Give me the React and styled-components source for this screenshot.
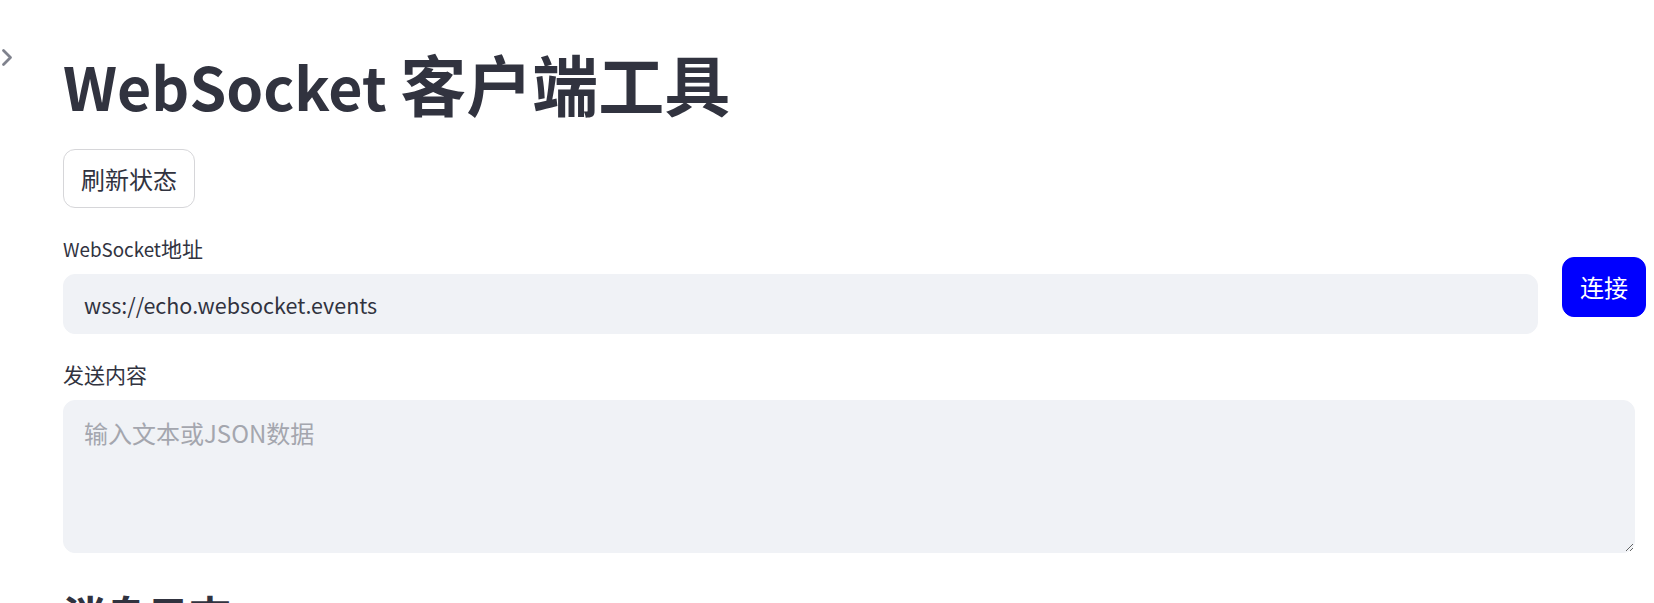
import React, { useState } from "react";
import styled, { createGlobalStyle } from "styled-components";

const GlobalStyle = createGlobalStyle`
  html, body {
    margin: 0;
    padding: 0;
    background: #ffffff;
  }
  body {
    font-family: "Noto Sans CJK SC", "Noto Sans", sans-serif;
    color: #31333f;
    overflow: hidden;
  }
  * {
    box-sizing: border-box;
  }
`;

const Page = styled.div`
  position: relative;
  min-height: 603px;
`;

const SidebarToggle = styled.button`
  position: absolute;
  left: 0;
  top: 47px;
  width: 16px;
  height: 21px;
  padding: 0;
  border: none;
  background: transparent;
  color: #7f828d;
  cursor: pointer;
  svg {
    display: block;
  }
`;

const Main = styled.main`
  display: flex;
  flex-direction: column;
  gap: 24px;
  padding: 43px 19px 0 63px;
`;

// latin runs in the CJK font come out too wide, so they get a smaller size
const Latin = styled.span`
  font-size: 0.895em;
  line-height: 1;
`;

const Title = styled.h1`
  margin: 0;
  padding-bottom: 4px;
  font-size: 66px;
  font-weight: 700;
  line-height: 78px;
  color: #31333f;
`;

const Subheader = styled.h3`
  margin: 0;
  padding-top: 12px;
  font-size: 42px;
  font-weight: 700;
  line-height: 1.2;
  color: #31333f;
`;

const Button = styled.button`
  display: inline-flex;
  align-items: center;
  justify-content: center;
  height: ${(p) => (p.$primary ? "60px" : "59px")};
  padding: 0 17px;
  border-radius: 12px;
  font-family: inherit;
  font-size: 24px;
  line-height: 1;
  cursor: pointer;
  border: 1px solid ${(p) => (p.$primary ? "#0000ff" : "#d6d6d9")};
  background: ${(p) => (p.$primary ? "#0000ff" : "#ffffff")};
  color: ${(p) => (p.$primary ? "#ffffff" : "#31333f")};
  margin-top: ${(p) => p.$offset || 0}px;
  flex-shrink: 0;
  align-self: flex-start;
`;

const Field = styled.div`
  display: flex;
  flex-direction: column;
  flex: 1;
  min-width: 0;
`;

const Label = styled.label`
  display: block;
  height: 33px;
  margin-bottom: 9px;
  font-size: 21px;
  line-height: 33px;
  color: #31333f;
`;

const Row = styled.div`
  display: flex;
  align-items: flex-start;
  gap: 24px;
  margin-right: -11px;
`;

const TextInput = styled.input`
  width: 100%;
  height: 60px;
  padding: 0 20px;
  border: 1px solid #f0f2f6;
  border-radius: 12px;
  background: #f0f2f6;
  font-family: inherit;
  font-size: 21.5px;
  color: #31333f;
  outline: none;
`;

const TextArea = styled.textarea`
  width: 100%;
  height: 153px;
  padding: 14px 20px;
  border: 1px solid #f0f2f6;
  border-radius: 12px;
  background: #f0f2f6;
  font-family: inherit;
  font-size: 24px;
  line-height: 1.5;
  color: #31333f;
  outline: none;
  resize: vertical;
  &::placeholder {
    color: #a4a6ae;
  }
`;

function Mixed({ text }) {
  const parts = text.split(/([A-Za-z0-9 :/.]+)/).filter(Boolean);
  return parts.map((part, i) =>
    /[A-Za-z0-9]/.test(part) ? <Latin key={i}>{part}</Latin> : <React.Fragment key={i}>{part}</React.Fragment>
  );
}

function ChevronRight() {
  return (
    <svg width="16" height="21" viewBox="0 0 16 21" fill="none">
      <polyline
        points="3.5,3.5 10.5,10.5 3.5,17.5"
        stroke="currentColor"
        strokeWidth="2.8"
        strokeLinecap="round"
        strokeLinejoin="round"
      />
    </svg>
  );
}

export default function App() {
  const [url, setUrl] = useState("wss://echo.websocket.events");
  const [message, setMessage] = useState("");

  return (
    <Page>
      <GlobalStyle />
      <SidebarToggle aria-label="open sidebar">
        <ChevronRight />
      </SidebarToggle>
      <Main>
        <Title>
          <Mixed text="WebSocket 客户端工具" />
        </Title>
        <div>
          <Button>刷新状态</Button>
        </div>
        <Row>
          <Field>
            <Label>
              <Mixed text="WebSocket地址" />
            </Label>
            <TextInput value={url} onChange={(e) => setUrl(e.target.value)} />
          </Field>
          <Button $primary $offset={25}>
            连接
          </Button>
        </Row>
        <Field>
          <Label>发送内容</Label>
          <TextArea
            placeholder="输入文本或JSON数据"
            value={message}
            onChange={(e) => setMessage(e.target.value)}
          />
        </Field>
        <Subheader>消息日志</Subheader>
      </Main>
    </Page>
  );
}
